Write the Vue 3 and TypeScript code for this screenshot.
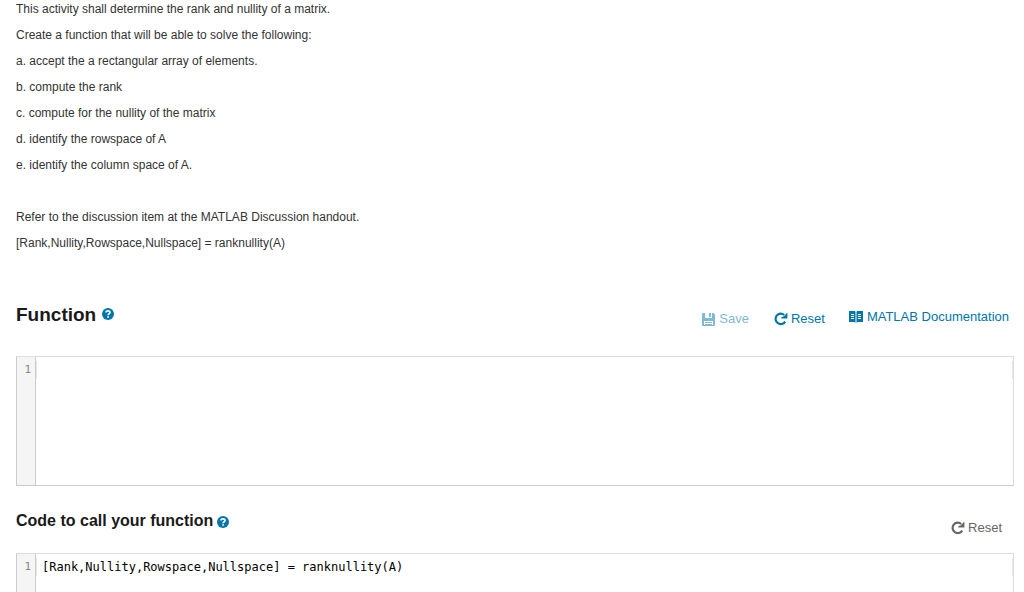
<script setup lang="ts">
import { ref } from 'vue'

const instructions: string[] = [
  'This activity shall determine the rank and nullity of a matrix.',
  'Create a function that will be able to solve the following:',
  'a. accept the a rectangular array of elements.',
  'b. compute the rank',
  'c. compute for the nullity of the matrix',
  'd. identify the rowspace of A',
  'e. identify the column space of A.',
  '\u00a0',
  'Refer to the discussion item at the MATLAB Discussion handout.',
  '[Rank,Nullity,Rowspace,Nullspace] = ranknullity(A)',
]

const initialCall = '[Rank,Nullity,Rowspace,Nullspace] = ranknullity(A)'
const functionCode = ref('')
const callCode = ref(initialCall)
</script>

<template>
  <main class="page">
    <section class="intro">
      <p v-for="(line, i) in instructions" :key="i">{{ line }}</p>
    </section>

    <section>
      <header class="bar">
        <div class="title">
          <h2 id="function-title">Function</h2>
          <button class="help" type="button" aria-label="Function help">
            <svg viewBox="0 0 12 12"><circle cx="6" cy="6" r="6" /><path d="M4 4.6C4 3.3 4.8 2.8 6 2.8s2 .6 2 1.7C8 5.8 6.1 5.7 6.1 7.2M6.1 8.3v1.5" /></svg>
          </button>
        </div>
        <div class="actions">
          <button class="action save" type="button" disabled>
            <svg viewBox="0 0 13 13"><path fill-rule="evenodd" d="M0 1Q0 0 1 0h10.5L13 1.5V12q0 1-1 1H1q-1 0-1-1ZM3 0v5h7V0H9v4H7V0ZM2 8v4h9V8ZM3 9h7v1H3ZM3 11h7v1H3Z" /></svg>
            Save
          </button>
          <button class="action reset" type="button" @click="functionCode = ''">
            <svg viewBox="0 0 14 14"><path class="arc" d="M11.2 9.6A5.2 5.2 0 1 1 10.2 3" /><path d="M13.4.6v6H7.4V5L9.6 4.4Z" /></svg>
            Reset
          </button>
          <a class="action docs" href="#documentation">
            <svg viewBox="0 0 14 12"><path fill-rule="evenodd" d="M0 0h5.5Q6.4 0 6.5 1v11Q6 11 5 11H0ZM14 0H8.5Q7.6 0 7.5 1v11Q8 11 9 11h5ZM2 3v1h3V3ZM2 5v1h3V5ZM2 7v1h3V7ZM9 3v1h3V3ZM9 5v1h3V5ZM9 7v1h3V7Z" /></svg>
            MATLAB Documentation
          </a>
        </div>
      </header>
      <div class="editor">
        <div class="gutter">1</div>
        <textarea v-model="functionCode" aria-labelledby="function-title" spellcheck="false" wrap="off"></textarea>
      </div>
    </section>

    <section>
      <header class="bar small">
        <div class="title">
          <h3 id="call-title">Code to call your function</h3>
          <button class="help" type="button" aria-label="Code to call your function help">
            <svg viewBox="0 0 12 12"><circle cx="6" cy="6" r="6" /><path d="M4 4.6C4 3.3 4.8 2.8 6 2.8s2 .6 2 1.7C8 5.8 6.1 5.7 6.1 7.2M6.1 8.3v1.5" /></svg>
          </button>
        </div>
        <button class="action muted" type="button" @click="callCode = initialCall">
          <svg viewBox="0 0 14 14"><path class="arc" d="M11.2 9.6A5.2 5.2 0 1 1 10.2 3" /><path d="M13.4.6v6H7.4V5L9.6 4.4Z" /></svg>
          Reset
        </button>
      </header>
      <div class="editor">
        <div class="gutter">1</div>
        <textarea v-model="callCode" aria-labelledby="call-title" spellcheck="false" wrap="off"></textarea>
      </div>
    </section>
  </main>
</template>

<style>
html {
  scrollbar-width: none;
}
body {
  margin: 0;
  background: #fff;
}
</style>

<style scoped>
.page {
  box-sizing: border-box;
  padding: 0 10px 0 16px;
  font-family: "Liberation Sans", Arial, Helvetica, sans-serif;
  color: #333;
}
.intro {
  font-size: 12px;
  line-height: 18px;
  padding-bottom: 40px;
}
p {
  margin: 0 0 8px;
}
.bar {
  display: flex;
  justify-content: space-between;
  align-items: flex-start;
  height: 56px;
}
.title {
  display: flex;
  align-items: center;
  gap: 6px;
}
h2,
h3 {
  margin: 0;
  font-weight: 700;
  color: #1a1a1a;
}
h2 {
  font-size: 19px;
  line-height: 30px;
}
h3 {
  font-size: 16px;
  line-height: 20px;
}
button {
  border: 0;
  padding: 0;
  background: none;
  font-family: inherit;
  cursor: pointer;
}
svg {
  display: block;
  fill: currentColor;
}
.help {
  color: #0076a8;
}
.help svg {
  width: 12px;
  height: 12px;
}
.bar:not(.small) .help {
  padding-bottom: 2px;
}
.small .help {
  padding-top: 2px;
}
.help path {
  fill: none;
  stroke: #fff;
  stroke-width: 1.7;
}
.actions {
  display: flex;
  align-items: flex-start;
  padding: 8px 5px 0 0;
}
.action {
  display: flex;
  align-items: center;
  gap: 4px;
  font-size: 13px;
  line-height: 18px;
  color: #0076a8;
  text-decoration: none;
  white-space: nowrap;
}
.action svg {
  width: 14px;
  height: 14px;
}
.arc {
  fill: none;
  stroke: currentColor;
  stroke-width: 2.2;
}
.save,
.reset {
  margin-top: 2px;
}
.save {
  color: #7fbad3;
  cursor: default;
}
.save svg {
  width: 13px;
  height: 13px;
}
.reset {
  margin-left: 25px;
  gap: 3px;
}
.docs {
  margin-left: 24px;
}
.docs svg {
  height: 12px;
}
.small {
  box-sizing: border-box;
  height: 67px;
  padding-top: 25px;
}
.small .title {
  gap: 4px;
}
.muted {
  gap: 3px;
  margin: 8px 12px 0 0;
  color: #666;
}
.editor {
  position: relative;
  display: flex;
  box-sizing: border-box;
  height: 130px;
  border: 1px solid #ccc;
  border-top-color: #ddd;
  border-right-color: #ddd;
  font-family: "DejaVu Sans Mono", monospace;
}
/* faint edges of the active line */
.editor::after {
  content: "";
  position: absolute;
  top: 4px;
  left: 19px;
  right: 0;
  height: 18px;
  border: solid #e6e6e6;
  border-width: 0 1px;
  box-sizing: border-box;
  pointer-events: none;
}
.gutter {
  box-sizing: border-box;
  width: 19px;
  padding: 4px 4px 0 0;
  border-right: 1px solid #ccc;
  background: #f5f5f5;
  color: #888;
  font-size: 11px;
  line-height: 18px;
  text-align: right;
}
textarea {
  flex: 1;
  min-width: 0;
  border: 0;
  outline: 0;
  resize: none;
  padding: 4px 6px;
  background: none;
  color: #000;
  font: 12px/18px "DejaVu Sans Mono", monospace;
}
</style>
